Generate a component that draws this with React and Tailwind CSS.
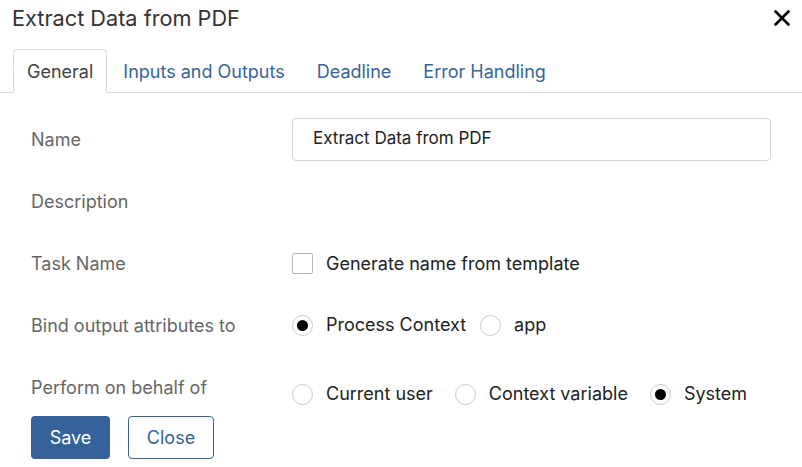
import { X } from "lucide-react";

const tabs = ["General", "Inputs and Outputs", "Deadline", "Error Handling"];

function Radio({ checked, label }) {
  return (
    <label className="flex items-center gap-[13px]">
      <span className="flex h-[21px] w-[21px] items-center justify-center rounded-full border border-[#c8c8c8] bg-white">
        {checked && <span className="h-[11px] w-[11px] rounded-full bg-black" />}
      </span>
      <span className="text-[18px] leading-[22px] text-[#222]">{label}</span>
    </label>
  );
}

function Row({ label, children }) {
  return (
    <div className="flex h-[62px] items-center">
      <div className="w-[261px] text-[18px] text-[#666]">{label}</div>
      <div className="flex flex-1 items-center pr-[31px]">{children}</div>
    </div>
  );
}

export default function App() {
  return (
    <div className="h-[467px] w-[802px] bg-white font-['Inter',sans-serif]">
      <div className="flex h-[49px] items-start justify-between pl-[12px] pr-[7px] pt-[3px]">
        <h1 className="text-[21.7px] leading-[30px] text-[#333]">Extract Data from PDF</h1>
        <button className="mt-[2px] text-black">
          <X size={26} strokeWidth={2.4} />
        </button>
      </div>

      <div className="flex border-b border-[#dcdcdc] pl-[13px]">
        {tabs.map((t, i) => (
          <div
            key={t}
            className={
              i === 0
                ? "-mb-px flex h-[44px] items-center rounded-t-[4px] border border-[#dcdcdc] border-b-white bg-white px-[13px] text-[18px] text-[#444]"
                : "-mb-px flex h-[44px] items-center border border-transparent px-[15px] text-[18px] text-[#35659b]"
            }
          >
            {t}
          </div>
        ))}
      </div>

      <div className="pl-[31px] pt-[15px]">
        <Row label="Name">
          <div className="flex h-[43px] w-full items-center rounded-[4px] border border-[#d4d4d4] px-[20px] text-[17px] text-[#222]">
            Extract Data from PDF
          </div>
        </Row>
        <Row label="Description" />
        <Row label="Task Name">
          <label className="flex items-center gap-[13px]">
            <span className="h-[21px] w-[21px] rounded-[2px] border border-[#b8b8b8] bg-white" />
            <span className="text-[18px] text-[#222]">Generate name from template</span>
          </label>
        </Row>
        <Row label="Bind output attributes to">
          <div className="flex items-center gap-[14px]">
            <Radio checked label="Process Context" />
            <Radio label="app" />
          </div>
        </Row>
        <div className="flex h-[56px] items-start">
          <div className="w-[261px] pt-[21px] text-[18px] leading-[22px] text-[#666]">Perform on behalf of</div>
          <div className="flex items-center gap-[22px] pt-[27px]">
            <Radio label="Current user" />
            <Radio label="Context variable" />
            <Radio checked label="System" />
          </div>
        </div>
        <div className="mt-[4px] flex gap-[18px]">
          <button className="h-[43px] w-[79px] rounded-[4px] bg-[#35629a] text-[18px] text-white">Save</button>
          <button className="h-[43px] w-[86px] rounded-[4px] border border-[#35629a] bg-white text-[18px] text-[#35629a]">
            Close
          </button>
        </div>
      </div>
    </div>
  );
}
